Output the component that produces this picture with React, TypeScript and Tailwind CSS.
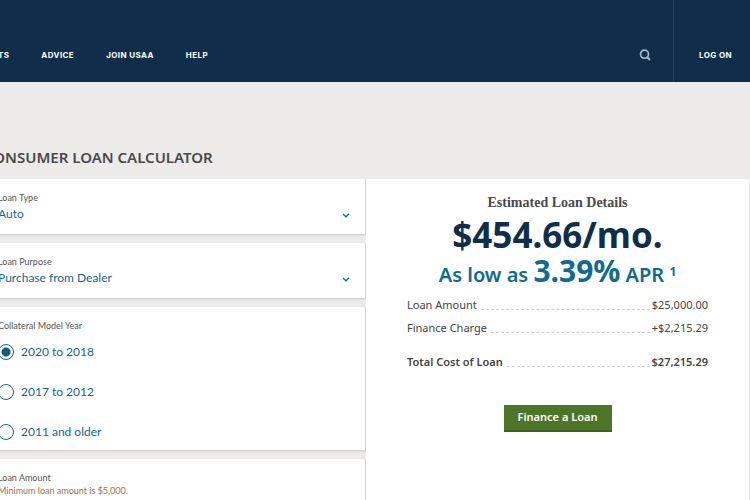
import { useState } from 'react';

const navItems = ['PRODUCTS', 'ADVICE', 'JOIN USAA', 'HELP'];

const selects = [
  { id: 'loan-type', label: 'Loan Type', options: ['Auto', 'Boat', 'Motorcycle', 'RV'] },
  { id: 'loan-purpose', label: 'Loan Purpose', options: ['Purchase from Dealer', 'Private Party', 'Refinance'] },
];

const modelYears = ['2020 to 2018', '2017 to 2012', '2011 and older'];

const details = [
  { label: 'Loan Amount', value: '$25,000.00', className: 'h-[23px]' },
  { label: 'Finance Charge', value: '+$2,215.29', className: 'h-[23px]' },
  { label: 'Total Cost of Loan', value: '$27,215.29', className: 'mt-[11px] h-[23px] font-semibold' },
];

const card = 'border-r border-b border-[#d6d6d4] bg-white pl-5 shadow-[0_1px_1px_#dededc]';

function Header() {
  return (
    <header className="flex h-[82px] bg-[#102e4a] font-['Inter',sans-serif] text-[8px] font-bold tracking-wider text-white">
      <nav className="-ml-10 flex w-[248px] shrink-0 items-center justify-end gap-8 pt-7 whitespace-nowrap">
        {navItems.map((item) => (
          <a key={item} href="#">
            {item}
          </a>
        ))}
      </nav>
      <div className="flex flex-1 items-center justify-end pt-7 pr-[22px]">
        <button type="button" aria-label="Search">
          <svg className="size-3" viewBox="0 0 12 12" fill="none" stroke="#9db9cf" strokeWidth="1.7">
            <circle cx="5.5" cy="5.2" r="4" />
            <path d="M7.8 7.8 11 11" strokeWidth="2" />
          </svg>
        </button>
      </div>
      <div className="flex w-[77px] items-center justify-center border-l border-[#27445e] pt-7 pl-[7px]">
        <a href="#">LOG ON</a>
      </div>
    </header>
  );
}

function SelectCard({ id, label, options }: { id: string; label: string; options: string[] }) {
  return (
    <div className={`relative h-14 pt-3 ${card}`}>
      <label htmlFor={id} className="block text-[9px] leading-[14px] text-[#555]">
        {label}
      </label>
      <select id={id} className="block w-full appearance-none bg-transparent text-xs leading-[18px] text-[#12678a] outline-none">
        {options.map((option) => (
          <option key={option}>{option}</option>
        ))}
      </select>
      <svg className="pointer-events-none absolute right-[15px] bottom-4 h-[5px] w-2" viewBox="0 0 8 5" fill="none" stroke="#0c7273" strokeWidth="1.4">
        <path d="M1 1 4 3.8 7 1" />
      </svg>
    </div>
  );
}

function LoanForm() {
  const [year, setYear] = useState(modelYears[0]);

  return (
    <form className="-ml-[22px] flex w-[388px] shrink-0 flex-col gap-2 font-['Lato',sans-serif]">
      {selects.map((item) => (
        <SelectCard key={item.id} {...item} />
      ))}
      <fieldset className={`h-36 ${card}`}>
        <legend className="float-left w-full pt-3 text-[9px] leading-[14px] text-[#555]">Collateral Model Year</legend>
        <div className="clear-both flex flex-col pt-[9px]">
          {modelYears.map((item) => (
            <label key={item} className="flex h-10 items-start gap-[7px] text-xs leading-5 text-[#12678a]">
              <input
                type="radio"
                name="model-year"
                className="mt-0.5 size-4 shrink-0 appearance-none rounded-full border border-[#12678a] bg-white checked:bg-[radial-gradient(circle,#0c5f82_4px,white_5px)]"
                checked={year === item}
                onChange={() => setYear(item)}
              />
              {item}
            </label>
          ))}
        </div>
      </fieldset>
      <div className={`h-20 pt-3 ${card}`}>
        <label htmlFor="loan-amount" className="block text-[9px] leading-[14px] text-[#555]">
          Loan Amount
        </label>
        <p className="text-[9px] leading-3 text-[#9a7250]">Minimum loan amount is $5,000.</p>
        <input id="loan-amount" className="block w-full text-xs leading-6 text-[#12678a] outline-none" defaultValue="25,000" />
      </div>
    </form>
  );
}

function LoanDetails() {
  return (
    <section className="mr-px min-w-0 flex-1 bg-white px-[41px] pt-4 text-center">
      <h2 className="font-['Liberation_Serif',serif] text-sm leading-4 font-bold text-[#4a4a4a]">Estimated Loan Details</h2>
      <p className="mt-1 text-[35px] leading-10 font-bold whitespace-nowrap text-[#102e4a]">$454.66/mo.</p>
      <p className="-mx-5 text-xl leading-8 font-semibold whitespace-nowrap text-[#106b90]">
        As low as <span className="text-3xl leading-8 font-bold">3.39%</span> APR <sup className="text-xs leading-none font-bold">1</sup>
      </p>
      <dl className="mt-[3px] text-[11px] text-[#444]">
        {details.map(({ label, value, className }) => (
          <div key={label} className={`flex items-center ${className}`}>
            <dt>{label}</dt>
            <dd className="flex flex-1 items-center">
              <span className="mr-0.5 ml-1 mt-2 flex-1 border-b border-dashed border-[#d2d2d2]" />
              {value}
            </dd>
          </div>
        ))}
      </dl>
      <button type="button" className="mt-[31px] h-[27px] w-[108px] border-b-2 border-[#405f22] bg-[#4d7528] text-[11px] font-semibold text-white">
        Finance a Loan
      </button>
    </section>
  );
}

export default function App() {
  return (
    <div className="min-h-screen overflow-hidden bg-[#ecebea] font-['Noto_Sans',sans-serif]">
      <Header />
      <h1 className="-ml-4 pt-[65px] pb-3 text-[15px] leading-5 font-semibold whitespace-nowrap text-[#4a4a4a]">CONSUMER LOAN CALCULATOR</h1>
      <main className="flex">
        <LoanForm />
        <LoanDetails />
      </main>
    </div>
  );
}
